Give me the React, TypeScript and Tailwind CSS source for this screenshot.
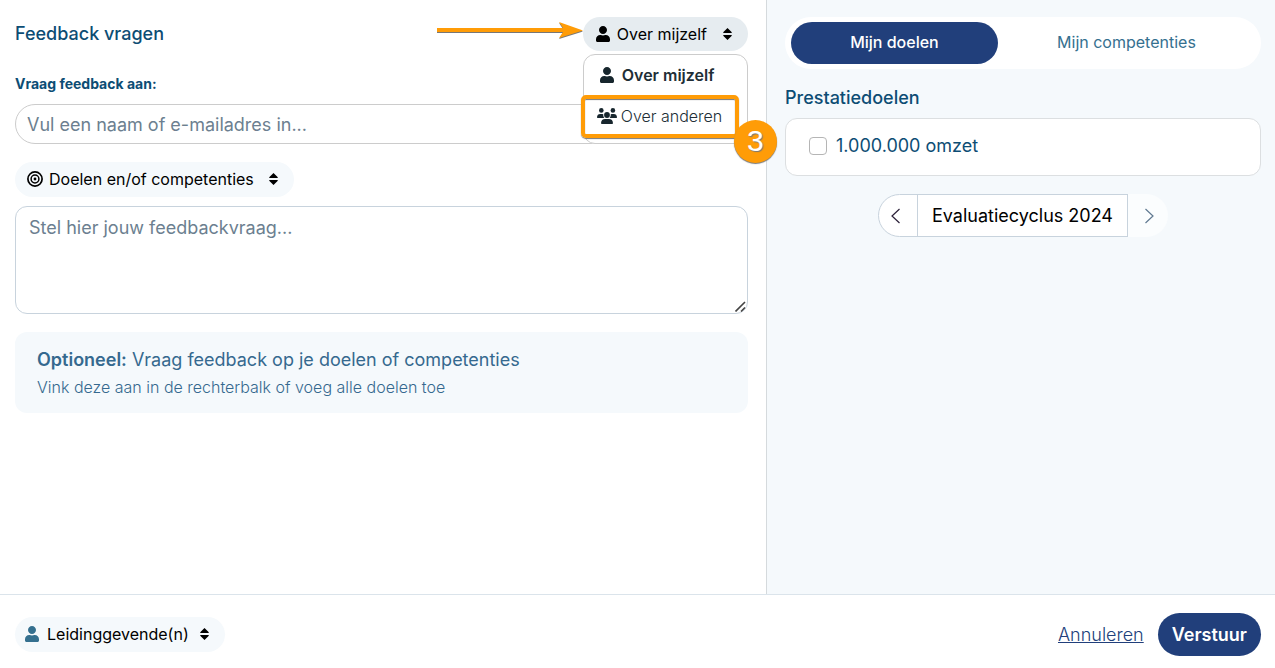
import React, { useState } from 'react';
import { FaUser } from 'react-icons/fa';

interface PillButtonProps {
  icon: React.ReactNode;
  label: string;
  className: string;
  expanded?: boolean;
  onClick?: () => void;
}

const SortIcon: React.FC = () => (
  <svg className="h-3 w-[9px]" viewBox="0 0 9 12" fill="currentColor" aria-hidden="true">
    <path d="M4.5 0 8.8 4.2Q9 5 8.3 5H.7Q0 5 .2 4.2ZM4.5 12 .2 7.8Q0 7 .7 7H8.3Q9 7 8.8 7.8Z" />
  </svg>
);

const TargetIcon: React.FC = () => (
  <svg className="size-4" viewBox="0 0 16 16" fill="none" stroke="currentColor" aria-hidden="true">
    <circle cx="8" cy="8" r="7.1" strokeWidth="1.7" />
    <circle cx="8" cy="8" r="3.9" strokeWidth="1.5" />
    <circle cx="8" cy="8" r="1.4" fill="currentColor" stroke="none" />
  </svg>
);

const GroupIcon: React.FC = () => (
  <svg className="h-4 w-5" viewBox="0 0 20 16" fill="currentColor" aria-hidden="true">
    <circle cx="4.3" cy="2.4" r="2.3" />
    <circle cx="15.9" cy="2.4" r="2.3" />
    <circle cx="10" cy="7" r="2.9" />
    <path d="M.6 10Q0 10 0 9.3C0 7.2 1.4 6 3.2 6H5.2Q5.8 6 6.3 6.2C6.1 7.8 6.5 9 7.4 10ZM19.4 10Q20 10 20 9.3C20 7.2 18.6 6 16.8 6H14.8Q14.2 6 13.7 6.2C13.9 7.8 13.5 9 12.6 10Z" />
    <path d="M4.9 16Q4 16 4 15.2C4 12.6 5.7 11 8.1 11H11.9C14.3 11 16 12.6 16 15.2Q16 16 15.1 16Z" />
  </svg>
);

const PillButton: React.FC<PillButtonProps> = ({ icon, label, className, expanded = false, onClick }) => (
  <button
    type="button"
    aria-haspopup="menu"
    aria-expanded={expanded}
    onClick={onClick}
    className={`flex items-center rounded-full text-base text-black ${className}`}
  >
    {icon}
    {label}
    <SortIcon />
  </button>
);

const SubjectMenu: React.FC = () => (
  <div
    role="menu"
    className="absolute top-[37px] right-0 left-0 z-10 h-[90px] rounded-xl border border-[#cccccc] bg-white text-[#212e36]"
  >
    <button type="button" role="menuitem" className="flex h-10 w-full items-center gap-2 pl-4 font-semibold">
      <FaUser className="h-4 w-[14px] text-[#17262d]" />
      Over mijzelf
    </button>
    <button type="button" role="menuitem" className="flex h-[42px] w-full items-center gap-1 pl-[13px] font-light">
      <span className="text-[#17262d]">
        <GroupIcon />
      </span>
      Over anderen
    </button>
    <div className="pointer-events-none absolute top-10 -left-[3px] h-[43px] w-[158px] rounded-[5px] border-4 border-[#ff9c07] shadow-[0_1px_1px_#777,inset_0_1px_1px_#777]" />
    <div className="pointer-events-none absolute top-[65px] left-[150px] flex size-[43px] items-center justify-center rounded-full bg-[#ff9c07] pb-0.5 font-['Liberation_Sans'] text-[30px] text-white shadow-[0_1px_1px_#777] [text-shadow:1px_1px_1px_#777]">
      3
    </div>
  </div>
);

const Pointer: React.FC = () => (
  <svg
    className="pointer-events-none absolute top-[5px] right-full h-[18px] w-[146px] drop-shadow-[0_1px_0_#777]"
    viewBox="0 0 146 18"
    fill="#ff9c07"
    aria-hidden="true"
  >
    <path d="M0 6H126L122 0 146 8.5 122 16 126 10H0Z" />
  </svg>
);

const RequestPanel: React.FC = () => {
  const [menuOpen, setMenuOpen] = useState(true);

  return (
    <main className="flex flex-col pt-[17px] pr-[18px] pl-[15px]">
      <div className="flex items-center justify-between">
        <h1 className="text-lg font-medium text-[#0d4d74]">Feedback vragen</h1>
        <div className="relative">
          <Pointer />
          <PillButton
            icon={<FaUser className="mr-[7px] h-4 w-[14px]" />}
            label="Over mijzelf"
            expanded={menuOpen}
            onClick={() => setMenuOpen(!menuOpen)}
            className="h-[34px] bg-[#e6ecf0] pr-4 pb-px pl-[13px] [&>svg:last-child]:ml-4"
          />
          {menuOpen && <SubjectMenu />}
        </div>
      </div>

      <label htmlFor="recipient" className="mt-[23px] text-sm leading-5 font-bold text-[#0d4d74]">
        Vraag feedback aan:
      </label>
      <input
        id="recipient"
        type="text"
        placeholder="Vul een naam of e-mailadres in..."
        className="mt-[10px] h-10 rounded-full border border-[#cccccc] px-[11px] text-lg placeholder:text-[#6c7f90]"
      />

      <PillButton
        icon={<TargetIcon />}
        label="Doelen en/of competenties"
        className="mt-[18px] h-[35px] gap-1.5 self-start bg-[#f5f9fc] pr-4 pb-px pl-3 [&>svg:last-child]:ml-[9px]"
      />

      <div className="relative mt-[9px] flex">
        <textarea
          aria-label="Feedbackvraag"
          placeholder="Stel hier jouw feedbackvraag..."
          className="h-[108px] w-full rounded-xl border border-[#c8d3dd] px-[13px] py-[7px] text-lg placeholder:text-[#6c7f90] [&::-webkit-resizer]:bg-transparent"
        />
        <svg
          className="pointer-events-none absolute right-0.5 bottom-0.5 size-[11px]"
          viewBox="0 0 11 11"
          fill="none"
          stroke="#444"
          strokeWidth="1.6"
          aria-hidden="true"
        >
          <path d="M.5 10.5 10 1M6 10.5 10 6.5" />
        </svg>
      </div>

      <div className="mt-[18px] rounded-xl bg-[#f5f9fc] px-[22px] pt-[14px] pb-3 text-[#35698f]">
        <p className="text-lg leading-7">
          <strong className="font-semibold">Optioneel:</strong> Vraag feedback op je doelen of competenties
        </p>
        <p className="text-base leading-[27px] font-light">Vink deze aan in de rechterbalk of voeg alle doelen toe</p>
      </div>
    </main>
  );
};

const GoalsPanel: React.FC = () => (
  <aside className="border-l border-[#d5dadd] bg-[#f5f9fc] pt-[17px] pr-[14px] pl-[18px]">
    <div role="tablist" className="flex h-[52px] items-center rounded-full bg-white px-[6px]">
      <button
        type="button"
        role="tab"
        aria-selected="true"
        className="h-[42px] flex-auto rounded-full bg-[#213f7b] pb-0.5 text-base font-medium text-white"
      >
        Mijn doelen
      </button>
      <button
        type="button"
        role="tab"
        aria-selected="false"
        className="h-[42px] flex-auto pb-0.5 text-base text-[#35708f]"
      >
        Mijn competenties
      </button>
    </div>

    <h2 className="mt-[15px] text-lg leading-7 font-medium text-[#0d4d74]">Prestatiedoelen</h2>
    <label className="mt-[6px] flex h-[58px] items-center gap-[9px] rounded-xl border border-[#dcdfe1] bg-white px-[23px] pb-[3px] text-lg text-[#0d4d74]">
      <input type="checkbox" className="size-[18px] appearance-none rounded-sm border border-[#b5b5b5] bg-white" />
      1.000.000 omzet
    </label>

    <div className="mt-[18px] flex h-[43px] justify-center text-lg text-black">
      <button
        type="button"
        aria-label="Vorige"
        className="flex w-10 items-center justify-center rounded-l-full border border-[#c8d3dd] bg-white pr-1 text-[#2b2038]"
      >
        <svg className="h-4 w-[9px]" viewBox="0 0 9 16" fill="none" stroke="currentColor" strokeWidth="1.2" aria-hidden="true">
          <path d="M8.5 1 1 8 8.5 15" />
        </svg>
      </button>
      <span className="-ml-px flex items-center border border-[#c8d3dd] bg-white px-[14px]">Evaluatiecyclus 2024</span>
      <button
        type="button"
        aria-label="Volgende"
        disabled
        className="flex w-10 items-center justify-center rounded-r-full bg-[#fbfdfe] pl-0.5 text-[#5f7890]"
      >
        <svg className="h-4 w-[9px]" viewBox="0 0 9 16" fill="none" stroke="currentColor" strokeWidth="1.2" aria-hidden="true">
          <path d="M.5 1 8 8 .5 15" />
        </svg>
      </button>
    </div>
  </aside>
);

const App: React.FC = () => (
  <div className="flex min-h-screen flex-col bg-white font-['Inter',sans-serif]">
    <div className="grid flex-1 grid-cols-[minmax(0,1fr)_509px]">
      <RequestPanel />
      <GoalsPanel />
    </div>
    <footer className="flex h-[74px] items-center justify-between border-t border-[#dbe4eb] pt-1.5 pr-[14px] pl-[15px]">
      <PillButton
        icon={<FaUser className="h-4 w-[14px] text-[#35708f]" />}
        label="Leidinggevende(n)"
        className="h-[35px] gap-2 bg-[#f5f9fc] pr-4 pb-0.5 pl-[10px] [&>svg:last-child]:ml-[3px]"
      />
      <div className="flex items-center gap-[14px] text-lg">
        <a href="#annuleren" className="font-light text-[#213f7b] underline">
          Annuleren
        </a>
        <button type="submit" className="h-[43px] rounded-full bg-[#213f7b] px-[14px] font-semibold text-white">
          Verstuur
        </button>
      </div>
    </footer>
  </div>
);

export default App;
